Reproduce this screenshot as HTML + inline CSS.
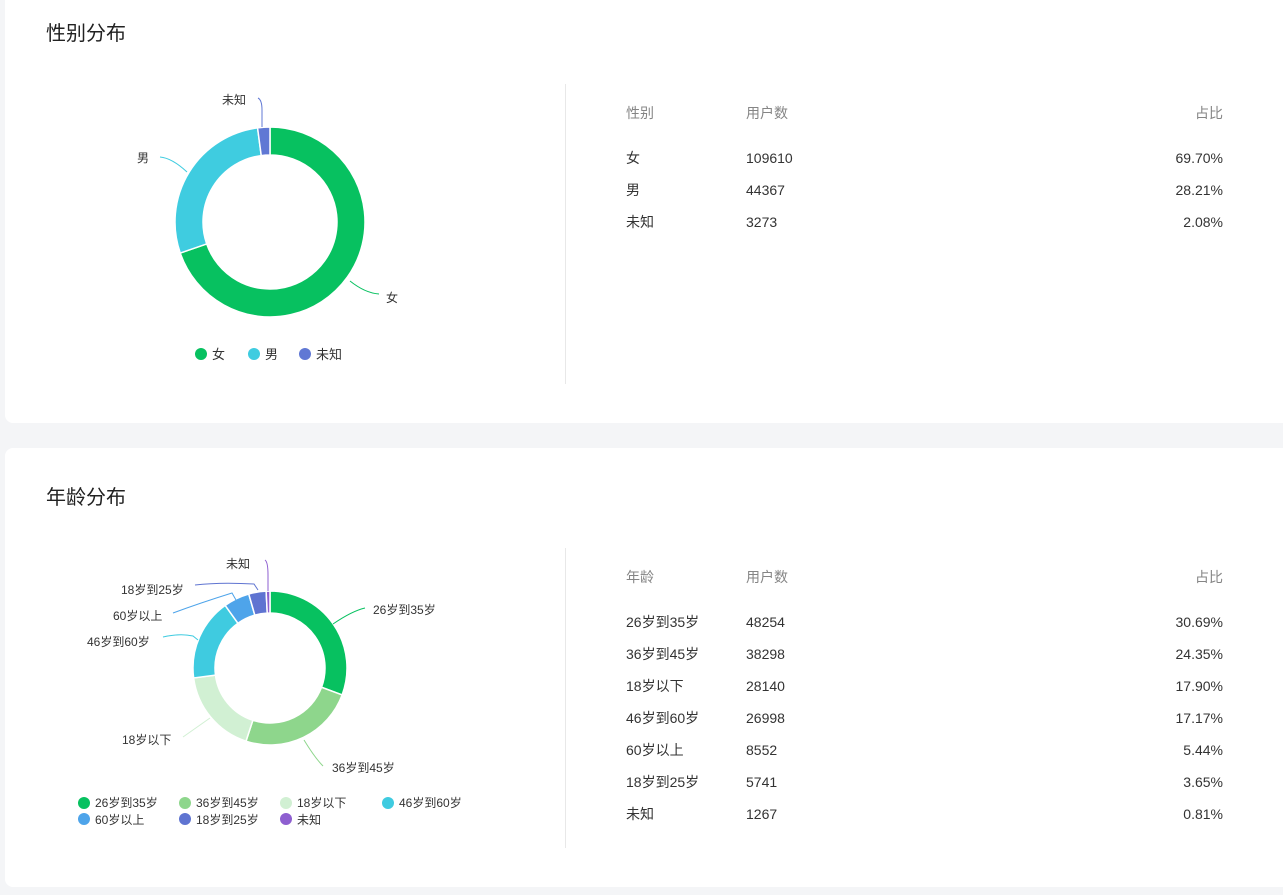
<!DOCTYPE html>
<html><head><meta charset="utf-8"><style>
*{margin:0;padding:0;box-sizing:border-box}
body{width:1283px;height:895px;background:#f4f5f7;font-family:"Liberation Sans","Noto Sans CJK SC",sans-serif;color:#333;position:relative;overflow:hidden}
.card{position:absolute;left:5px;width:1290px;background:#fff;border-radius:8px}
.title{position:absolute;left:41px;font-size:20px;color:#222;line-height:24px}
.vline{position:absolute;left:560px;width:1px;background:#e8e8e8}
.t{position:absolute;font-size:14px;color:#333;white-space:nowrap;line-height:16px;height:16px}
.h{color:#858585}
.r{text-align:right;width:100px}
svg{position:absolute;left:0;top:0}
svg text{font-family:"Liberation Sans","Noto Sans CJK SC",sans-serif;font-size:12px;fill:#333}
</style></head><body>
<div class="card" style="top:-10px;height:433px">
<div class="title" style="top:32px">性别分布</div>
<div class="vline" style="top:94px;height:300px"></div>
</div>
<div class="card" style="top:448px;height:439px">
<div class="title" style="top:38px">年龄分布</div>
<div class="vline" style="top:100px;height:300px"></div>
</div>

<div class="t h" style="left:626px;top:105px">性别</div>
<div class="t h" style="left:746px;top:105px">用户数</div>
<div class="t h r" style="left:1123px;top:105px">占比</div>
<div class="t" style="left:626px;top:150px">女</div><div class="t" style="left:746px;top:150px">109610</div><div class="t r" style="left:1123px;top:150px">69.70%</div>
<div class="t" style="left:626px;top:182px">男</div><div class="t" style="left:746px;top:182px">44367</div><div class="t r" style="left:1123px;top:182px">28.21%</div>
<div class="t" style="left:626px;top:214px">未知</div><div class="t" style="left:746px;top:214px">3273</div><div class="t r" style="left:1123px;top:214px">2.08%</div>

<div class="t h" style="left:626px;top:569px">年龄</div>
<div class="t h" style="left:746px;top:569px">用户数</div>
<div class="t h r" style="left:1123px;top:569px">占比</div>
<div class="t" style="left:626px;top:614px">26岁到35岁</div><div class="t" style="left:746px;top:614px">48254</div><div class="t r" style="left:1123px;top:614px">30.69%</div>
<div class="t" style="left:626px;top:646px">36岁到45岁</div><div class="t" style="left:746px;top:646px">38298</div><div class="t r" style="left:1123px;top:646px">24.35%</div>
<div class="t" style="left:626px;top:678px">18岁以下</div><div class="t" style="left:746px;top:678px">28140</div><div class="t r" style="left:1123px;top:678px">17.90%</div>
<div class="t" style="left:626px;top:710px">46岁到60岁</div><div class="t" style="left:746px;top:710px">26998</div><div class="t r" style="left:1123px;top:710px">17.17%</div>
<div class="t" style="left:626px;top:742px">60岁以上</div><div class="t" style="left:746px;top:742px">8552</div><div class="t r" style="left:1123px;top:742px">5.44%</div>
<div class="t" style="left:626px;top:774px">18岁到25岁</div><div class="t" style="left:746px;top:774px">5741</div><div class="t r" style="left:1123px;top:774px">3.65%</div>
<div class="t" style="left:626px;top:806px">未知</div><div class="t" style="left:746px;top:806px">1267</div><div class="t r" style="left:1123px;top:806px">0.81%</div>

<svg width="1283" height="895" id="s">
<g id="d1"></g><g id="d2"></g>
<g fill="none" stroke-width="1">
<path d="M258 98 Q262 100 262 110 L262 127" stroke="#6078d4"/>
<path d="M160 157 Q172 158 187 172" stroke="#3fcce0"/>
<path d="M350 281 Q365 293 379 294" stroke="#07c160"/>
<path d="M265 560 Q268 562 268 575 L268 591" stroke="#8e5fd0"/>
<path d="M195 585 Q220 582 254 584 L258 590" stroke="#5f74d1"/>
<path d="M173 613 Q200 603 232 593 L236 600" stroke="#4ea4ea"/>
<path d="M163 637 Q180 633 193 636 L198 640" stroke="#3fcbe0"/>
<path d="M183 737 Q200 725 210 718" stroke="#d1f0d3"/>
<path d="M304 740 Q315 758 323 766" stroke="#8ed68c"/>
<path d="M333 624 Q352 611 365 608" stroke="#07c160"/>
</g>
<text x="222" y="104">未知</text>
<text x="137" y="162">男</text>
<text x="386" y="302">女</text>
<text x="226" y="568">未知</text>
<text x="121" y="594">18岁到25岁</text>
<text x="113" y="620">60岁以上</text>
<text x="87" y="646">46岁到60岁</text>
<text x="122" y="744">18岁以下</text>
<text x="332" y="772">36岁到45岁</text>
<text x="373" y="614">26岁到35岁</text>
<circle cx="201" cy="354" r="6" fill="#07c160"/><text x="212" y="359" style="font-size:13px">女</text>
<circle cx="254" cy="354" r="6" fill="#3fcce0"/><text x="265" y="359" style="font-size:13px">男</text>
<circle cx="305" cy="354" r="6" fill="#6078d4"/><text x="316" y="359" style="font-size:13px">未知</text>
<circle cx="84" cy="803" r="6" fill="#07c160"/><text x="95" y="807">26岁到35岁</text>
<circle cx="185" cy="803" r="6" fill="#8ed68c"/><text x="196" y="807">36岁到45岁</text>
<circle cx="286" cy="803" r="6" fill="#d1f0d3"/><text x="297" y="807">18岁以下</text>
<circle cx="388" cy="803" r="6" fill="#3fcbe0"/><text x="399" y="807">46岁到60岁</text>
<circle cx="84" cy="819" r="6" fill="#4ea4ea"/><text x="95" y="824">60岁以上</text>
<circle cx="185" cy="819" r="6" fill="#5f74d1"/><text x="196" y="824">18岁到25岁</text>
<circle cx="286" cy="819" r="6" fill="#8e5fd0"/><text x="297" y="824">未知</text>
</svg>
<script>
function donut(id,cx,cy,R,r,vals,cols){
 var g=document.getElementById(id),a=0,s='';
 for(var i=0;i<vals.length;i++){
  var b=a+vals[i]/100*2*Math.PI;
  function p(rr,t){return (cx+rr*Math.sin(t)).toFixed(2)+' '+(cy-rr*Math.cos(t)).toFixed(2)}
  var l=(b-a)>Math.PI?1:0;
  s+='<path d="M'+p(R,a)+' A'+R+' '+R+' 0 '+l+' 1 '+p(R,b)+' L'+p(r,b)+' A'+r+' '+r+' 0 '+l+' 0 '+p(r,a)+'Z" fill="'+cols[i]+'" stroke="#fff" stroke-width="1.5"/>';
  a=b;
 }
 g.innerHTML=s;
}
donut('d1',270,222,95,67,[69.70,28.21,2.09],['#07c160','#3fcce0','#6078d4']);
donut('d2',270,668,77,55,[30.69,24.35,17.90,17.17,5.44,3.65,0.80],['#07c160','#8ed68c','#d1f0d3','#3fcbe0','#4ea4ea','#5f74d1','#8e5fd0']);
</script>
</body></html>
